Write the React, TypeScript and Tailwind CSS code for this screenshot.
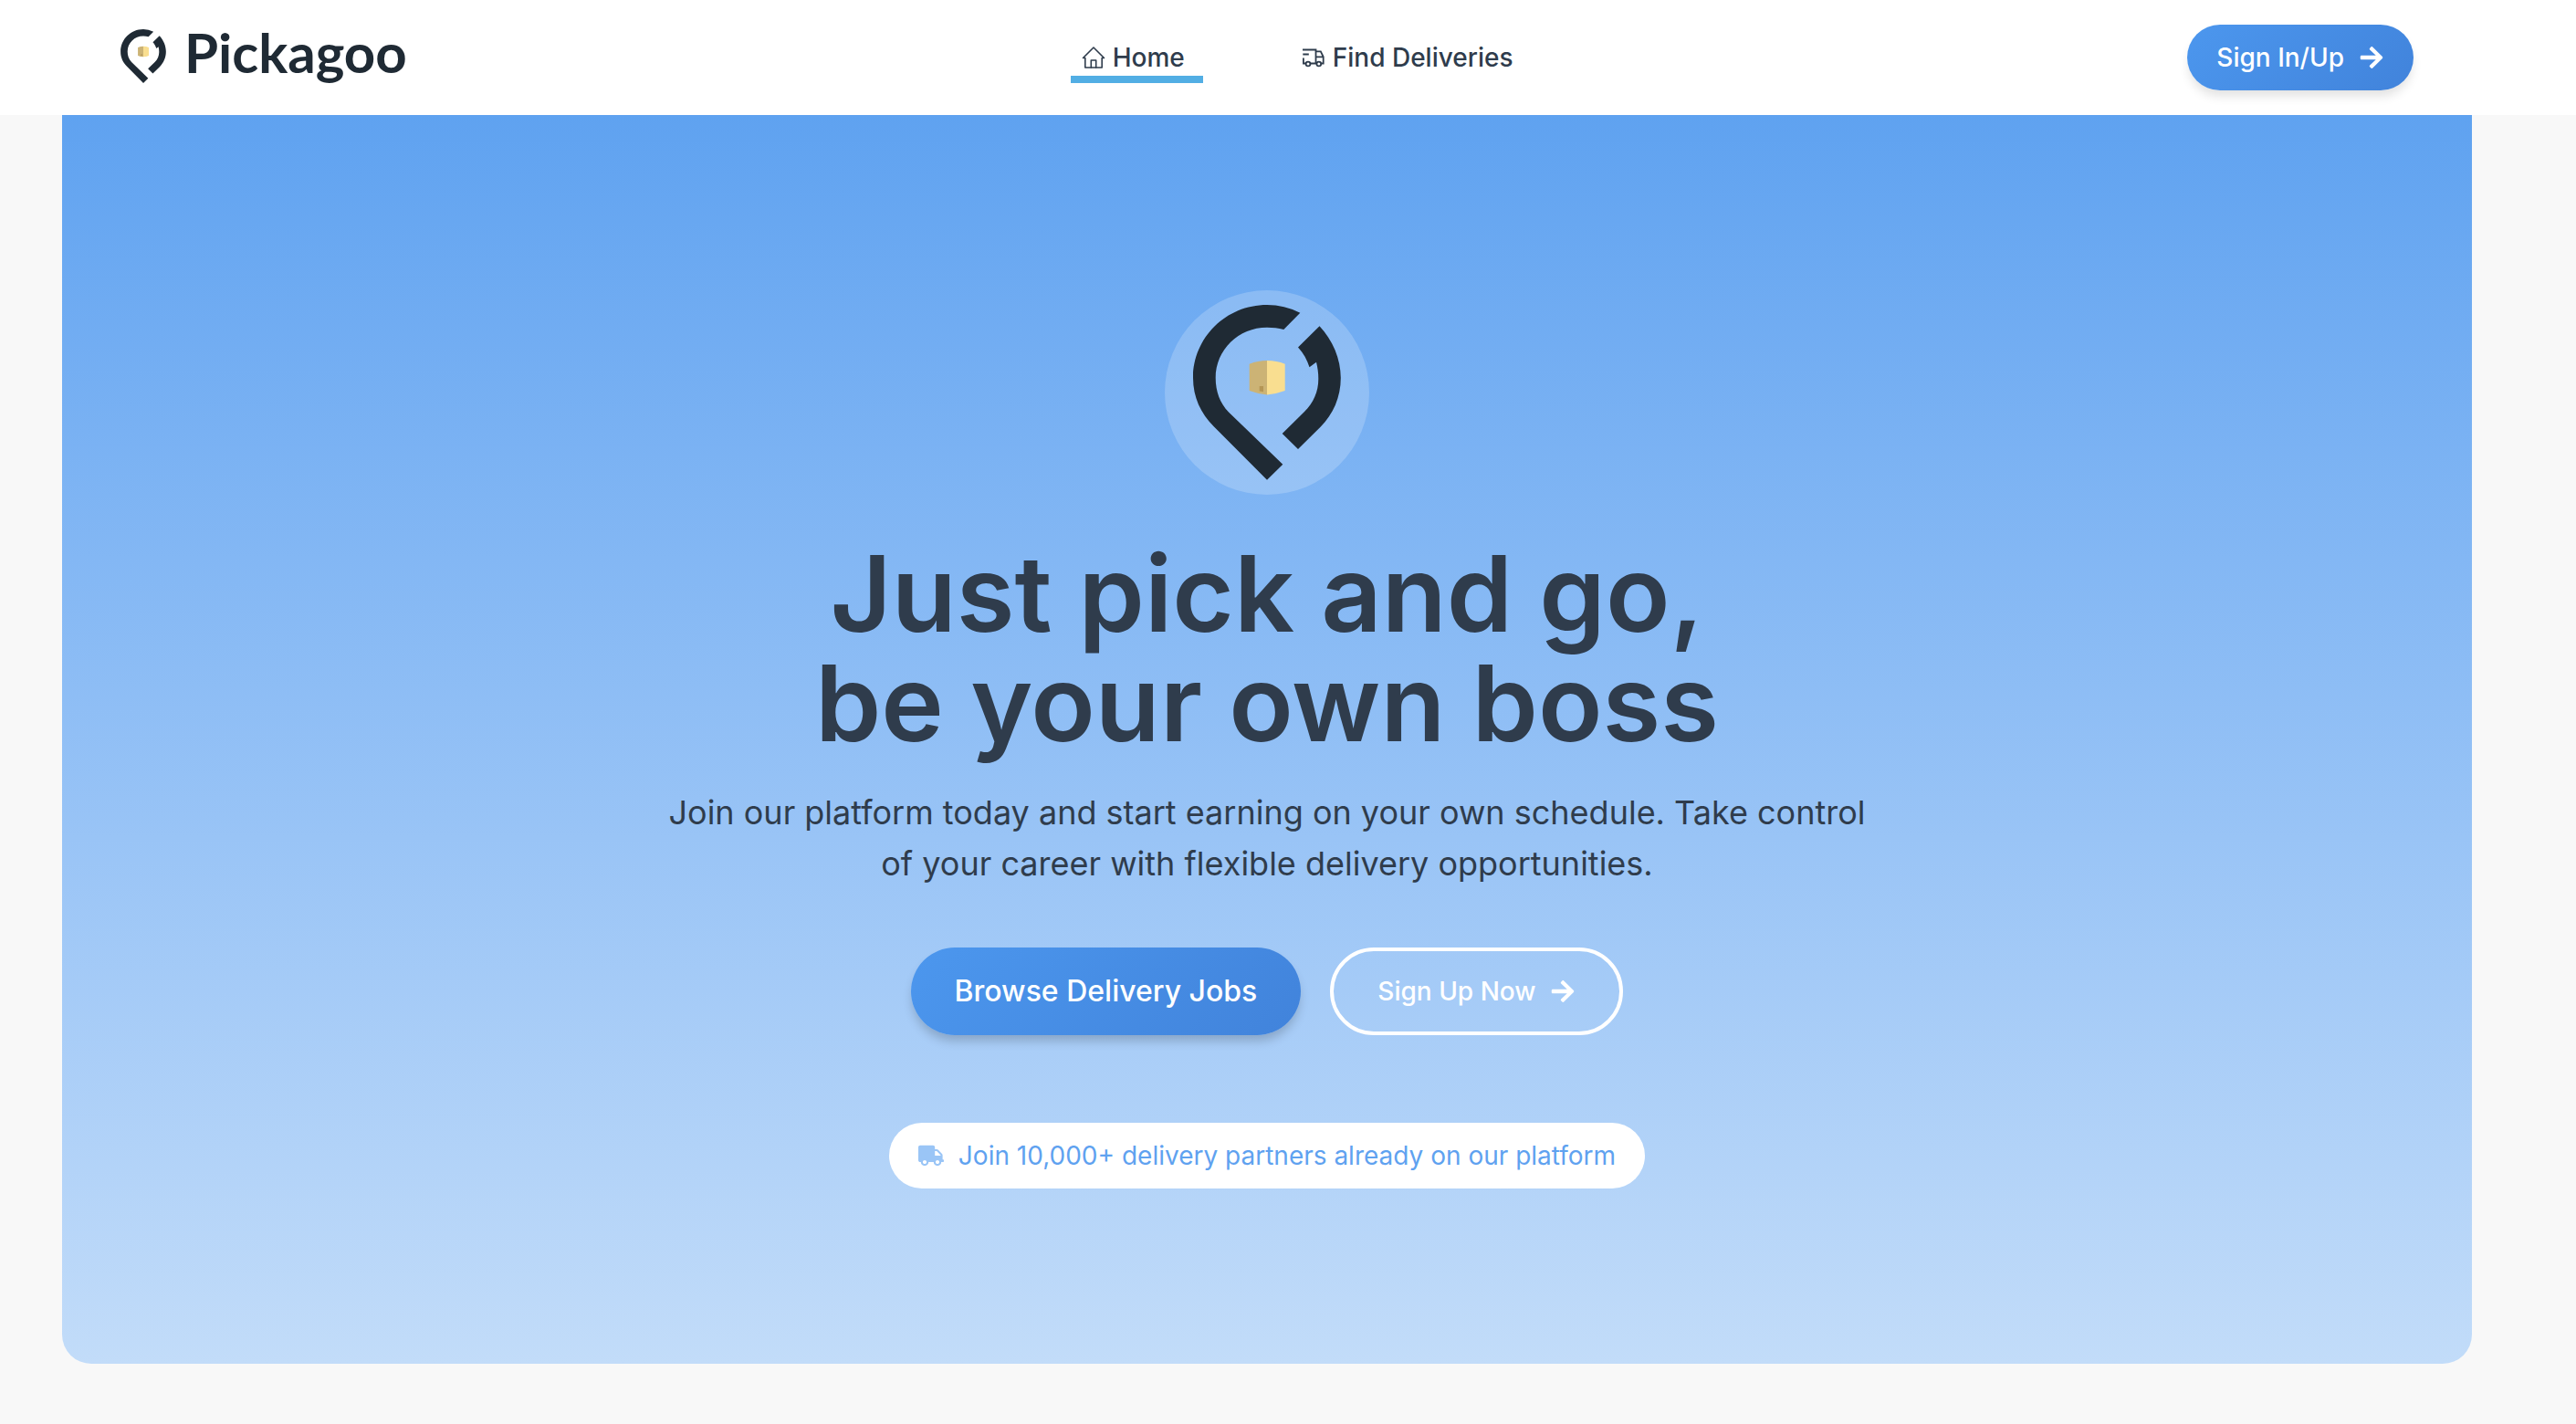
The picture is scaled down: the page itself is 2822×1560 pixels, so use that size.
import { FaArrowRight, FaTruck } from "react-icons/fa";

function PinLogo({ className }: { className: string }) {
  return (
    <svg viewBox="0 0 162 192" className={className} aria-hidden="true">
      <path
        fill="#1f2a34"
        d="M117.3 8.7A81 81 0 0 0 81 0C36 0 0 36 0 80c0 21 8.500 39 22.500 53L81 191.700l17.300-17L39 117.500C29.500 107.500 24.700 95 24.700 80 24.700 49 50 24.700 81 24.700c6.500 0 12.500.8 18.300 2.300z"
      />
      <path
        fill="#1f2a34"
        d="M138.500 23.300C153 39 161.800 59 161.800 80c0 21-8.300 40-22.500 54l-24.300 24-17.300-17 24.300-24c10-10 15.300-22 15.300-36 0-6.500-.8-12.500-2.300-18.300l-7.500 5.500c-2.500-8-6.500-15-12.500-21.700z"
      />
      <path fill="#ccb375" d="M61.700 64.700Q71 61 81.300 61v37.500Q71 97.500 61.700 94z" />
      <path fill="#f9de90" d="M81 61q10.500 0 19.700 3.700V94Q91.500 97.500 81 98.500z" />
      <path fill="#b59655" d="M72.700 89h4.300v6.300l-4.300-.7z" />
    </svg>
  );
}

function HouseIcon() {
  return (
    <svg
      viewBox="0 0 26 26"
      className="size-[26px]"
      fill="none"
      stroke="currentColor"
      strokeWidth="1.6"
      strokeLinejoin="round"
      strokeLinecap="round"
      aria-hidden="true"
    >
      <path d="M1.500 13.500 13 2l11.500 11.500h-2.300V24H3.800V13.500z" />
      <path d="M10.300 24v-8h5.400v8" />
    </svg>
  );
}

function ShippingIcon() {
  return (
    <svg
      viewBox="0 0 26 26"
      className="size-[26px]"
      fill="none"
      stroke="currentColor"
      strokeWidth="1.800"
      aria-hidden="true"
    >
      <path d="M1 4.500h14.500v15M1.300 9.500h6.500M1.900 13.500v6h2.700M9.500 19.500h6.800" />
      <path d="M15.500 6.300h5.300l2.900 6v7.200h-2.300M15.500 12.300h8" />
      <circle cx="7" cy="20" r="2.400" />
      <circle cx="18.800" cy="20" r="2.400" />
    </svg>
  );
}

export default function App() {
  return (
    <div className="min-h-screen bg-[#f8f8f8] font-['Inter',sans-serif] text-[#2f3c4c]">
      <header className="bg-white pr-[46px]">
        <div className="flex h-[126px] items-center justify-between px-[132px]">
          <a href="#" className="flex items-center gap-5 pb-1 text-[#1f2a34]">
            <PinLogo className="h-[59px] w-[50px]" />
            <span className="pb-2 font-['Lato',sans-serif] text-[60px] leading-none font-bold">Pickagoo</span>
          </a>
          <nav className="flex items-center gap-24 text-[28px] leading-[40px] font-medium">
            <a href="#" className="flex items-center gap-2 border-b-8 border-[#52aee4] pt-2 pr-5 pl-3">
              <HouseIcon />
              Home
            </a>
            <a href="#deliveries" className="flex items-center gap-2 px-3">
              <ShippingIcon />
              Find Deliveries
            </a>
          </nav>
          <button
            type="button"
            className="flex h-[72px] items-center gap-4 rounded-full bg-linear-135 from-[#4c97ee] to-[#4183db] px-8 text-[28px] font-medium text-white shadow-[0_8px_12px_-2px_rgba(0,0,0,0.12)]"
          >
            Sign In/Up
            <FaArrowRight className="size-7" />
          </button>
        </div>
      </header>
      <main className="pr-[46px]">
        <section className="mx-[68px] flex flex-col items-center rounded-b-[32px] bg-linear-to-b from-[#5fa2f0] to-[#c2dcf9] pt-48 pb-48 text-center">
          <div className="flex size-56 justify-center rounded-full bg-white/20 pt-4">
            <PinLogo className="h-48 w-[162px]" />
          </div>
          <h1 className="mt-12 text-[116px] leading-[120px] font-semibold">
            Just pick and go,
            <br />
            be your own boss
          </h1>
          <p className="mt-8 max-w-[1344px] text-[36px] leading-[56px]">
            Join our platform today and start earning on your own schedule. Take control of your career with flexible
            delivery opportunities.
          </p>
          <div className="mt-16 flex gap-8 text-white">
            <button
              type="button"
              className="h-24 rounded-full bg-linear-135 from-[#4c97ee] to-[#4183db] px-12 text-[32px] font-medium shadow-[0_8px_12px_-2px_rgba(0,0,0,0.2)]"
            >
              Browse Delivery Jobs
            </button>
            <button
              type="button"
              className="flex h-24 items-center gap-4 rounded-full border-4 border-white px-12 text-[28px] font-medium"
            >
              Sign Up Now
              <FaArrowRight className="size-7" />
            </button>
          </div>
          <div className="mt-24 flex h-[72px] items-center gap-4 rounded-full bg-white px-8 text-[28px] text-[#5fa2f0]">
            <FaTruck className="size-7 text-[#9ac5f6]" />
            Join 10,000+ delivery partners already on our platform
          </div>
        </section>
      </main>
    </div>
  );
}
